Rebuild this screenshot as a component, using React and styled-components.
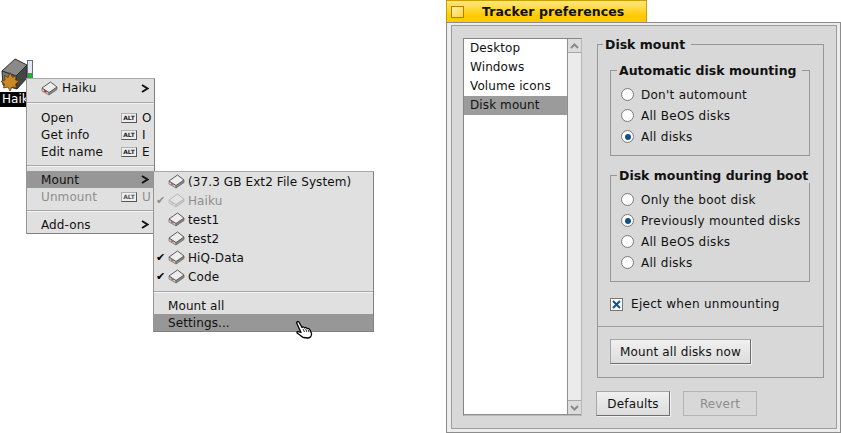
import React from 'react';
import styled, { createGlobalStyle } from 'styled-components';

const GlobalStyle = createGlobalStyle`
html, body {
  margin: 0;
  padding: 0;
  background: #fff;
}
body {
  width: 841px;
  height: 433px;
  overflow: hidden;
  font-family: "DejaVu Sans", Verdana, sans-serif;
  font-size: 12px;
  color: #111;
}
`;

const Desktop = styled.div`
position: relative;
width: 841px;
height: 433px;
overflow: hidden;
`;

/* desktop icon */
const VolumeIcon = styled.div`
position: absolute;
left: 0;
top: 58px;
width: 40px;
`;

const VolumeLabel = styled.div`
background: #000;
color: #fff;
width: 38px;
height: 15px;
line-height: 15px;
padding-left: 2px;
font-size: 12px;
white-space: nowrap;
`;

const BigDisk = () => (
  <svg width="36" height="34" viewBox="0 0 36 34" style={{ display: 'block' }}>
    <path d="M2 13 L15 1 L27 7 L16 18 Z" fill="#8a8a8a" stroke="#2c2c2c" strokeWidth="1" strokeLinejoin="round" />
    <path d="M2 13 L16 18 L17 31 L3 27 Z" fill="#767676" stroke="#2c2c2c" strokeWidth="1" strokeLinejoin="round" />
    <path d="M16 18 L27 7 L27 20 L17 31 Z" fill="#454545" stroke="#2c2c2c" strokeWidth="1" strokeLinejoin="round" />
    <path d="M10 14.5 L12.5 19.5 L16 17.5 L15.5 22 L19 23 L15.5 26 L16.5 29.5 L12 29 L10 33 L8 29 L3.5 30 L4.5 26 L1 23.5 L5 22 L4.5 17.5 L8 19.5 Z" fill="#c98a26" stroke="#5a3a10" strokeWidth="0.8" strokeLinejoin="miter" />
    <rect x="27.5" y="2.5" width="5" height="18" fill="#e2e8ee" stroke="#5d6f80" strokeWidth="1" />
    <rect x="28" y="15" width="4" height="5" fill="#1fb030" />
  </svg>
);

const DiskIcon = ({ dim, red }) => (
  <svg width="17" height="15" viewBox="0 0 17 15" style={{ display: 'block', opacity: dim ? 0.3 : 1 }}>
    <path d="M1 7 L8 11.5 L8 14 L1 10 Z" fill="#cfcfcf" stroke="#777" strokeWidth="0.8" strokeLinejoin="round" />
    <path d="M8 11.5 L16 6 L16 8.5 L8 14 Z" fill="#8a8a8a" stroke="#666" strokeWidth="0.8" strokeLinejoin="round" />
    <path d="M1 7 L9.5 1 L16 6 L8 11.5 Z" fill="#ededed" stroke="#5c5c5c" strokeWidth="1" strokeLinejoin="round" />
    <path d="M3 9.6 L5.5 11.2" stroke={red ? '#e01818' : '#b86a55'} strokeWidth="1.4" />
  </svg>
);

const HandCursor = styled.svg`
position: absolute;
left: 295px;
top: 320px;
`;

/* menus */
const Menu = styled.div`
position: absolute;
left: ${p => p.$left}px;
top: ${p => p.$top}px;
width: ${p => p.$width}px;
box-sizing: border-box;
background: #e0e0e0;
border: 1px solid #808080;
border-top-color: #a8a8a8;
border-left-color: #969696;
`;

const Item = styled.div`
position: relative;
display: flex;
align-items: center;
height: ${p => p.$height || 17}px;
padding-left: ${p => p.$indent}px;
padding-right: 4px;
background: ${p => (p.$active ? '#979797' : 'transparent')};
color: ${p => (p.$disabled ? '#8e8e8e' : '#111')};
white-space: nowrap;
letter-spacing: 0.1px;
`;

const ItemLabel = styled.span`
flex: 1;
`;

const IconSlot = styled.span`
width: ${p => p.$width || 20}px;
flex: none;
display: flex;
align-items: center;
`;

const Check = styled.span`
position: absolute;
left: 2px;
width: 10px;
font-size: 11px;
color: ${p => (p.$dim ? '#8e8e8e' : '#000')};
`;

const Separator = styled.div`
height: ${p => p.$height || 12}px;
display: flex;
align-items: center;
&::after {
  content: "";
  display: block;
  width: 100%;
  height: 1px;
  background: #a8a8a8;
  border-bottom: 1px solid #f4f4f4;
}
`;

const AltKey = styled.span`
display: inline-block;
box-sizing: border-box;
width: 16px;
height: 10px;
margin-right: 5px;
background: #eee;
border: 1px solid #b0b0b0;
border-right-color: #555;
border-bottom-color: #555;
font-size: 6px;
font-weight: bold;
line-height: 8px;
text-align: center;
letter-spacing: 0;
color: ${p => (p.$disabled ? '#555' : '#222')};
`;

const ShortcutLetter = styled.span`
width: 8px;
`;

const ArrowIcon = styled.svg`
flex: none;
margin-right: 1px;
`;

const Arrow = () => (
  <ArrowIcon width="8" height="9" viewBox="0 0 8 9">
    <path d="M1 1 L6.5 4.5 L1 8" fill="none" stroke="#111" strokeWidth="2" />
  </ArrowIcon>
);

const MenuRow = ({ label, letter, disabled, active, arrow, icon, height }) => (
  <Item $indent={14} $disabled={disabled} $active={active} $height={height}>
    {icon && <IconSlot $width={21}>{icon}</IconSlot>}
    <ItemLabel>{label}</ItemLabel>
    {letter && <AltKey $disabled={disabled}>ALT</AltKey>}
    {letter && <ShortcutLetter>{letter}</ShortcutLetter>}
    {arrow && <Arrow />}
  </Item>
);

const VolumeRow = ({ label, checked, dim }) => (
  <Item $indent={14} $height={19} $disabled={dim}>
    {checked && <Check $dim={dim}>✔</Check>}
    <IconSlot><DiskIcon dim={dim} /></IconSlot>
    <ItemLabel>{label}</ItemLabel>
  </Item>
);

/* tracker window */
const Win = styled.div`
position: absolute;
left: 446px;
top: 0;
width: 395px;
height: 433px;
`;

const Tab = styled.div`
display: flex;
align-items: center;
box-sizing: border-box;
width: 201px;
height: 22px;
padding-left: 4px;
gap: 18px;
background: linear-gradient(#ffe680, #ffcb00 70%);
border: 1px solid #c9a000;
border-bottom: none;
font-weight: bold;
font-size: 12.5px;
letter-spacing: 0.1px;
white-space: nowrap;
`;

const CloseBox = styled.span`
width: 13px;
height: 12px;
flex: none;
box-sizing: border-box;
background: linear-gradient(135deg, #ffeeb0, #ffd23c);
border: 1px solid #a98600;
`;

const Frame = styled.div`
box-sizing: border-box;
height: 411px;
border: 1px solid #8c8c8c;
background: #ececec;
padding: 2px 3px 3px 4px;
`;

const Body = styled.div`
box-sizing: border-box;
height: 100%;
border: 1px solid #9c9c9c;
background: #d8d8d8;
display: flex;
padding: 12px 0 0 11px;
`;

const ListBox = styled.div`
display: flex;
width: 119px;
height: 378px;
box-sizing: border-box;
border: 1px solid #858585;
border-right-color: #b8b8b8;
border-bottom-color: #b8b8b8;
flex: none;
`;

const List = styled.div`
flex: 1;
background: #fff;
border-right: 1px solid #909090;
border-bottom: 1px solid #909090;
`;

const ListItem = styled.div`
height: 19px;
line-height: 19px;
padding-left: 6px;
letter-spacing: 0.1px;
background: ${p => (p.$selected ? '#9b9b9b' : 'transparent')};
`;

const ScrollBar = styled.div`
width: 13px;
display: flex;
flex-direction: column;
background: #ebebeb;
border-bottom: 1px solid #909090;
`;

const ScrollBtn = styled.div`
height: 13px;
display: flex;
align-items: center;
justify-content: center;
background: #dcdcdc;
border-${p => p.$edge}: 1px solid #a8a8a8;
`;

const ScrollTrack = styled.div`
flex: 1;
`;

const Right = styled.div`
margin-left: 15px;
width: 228px;
display: flex;
flex-direction: column;
`;

const Group = styled.fieldset`
margin: 0;
padding: 0;
border: 1px solid #979797;
min-width: 0;
`;

const Legend = styled.legend`
margin-left: ${p => p.$offset}px;
padding: 0 ${p => p.$gap}px 0 2px;
font-weight: bold;
font-size: 12.5px;
line-height: 15px;
white-space: nowrap;
`;

const OuterGroup = styled(Group)`
width: 227px;
height: 341px;
box-sizing: border-box;
margin-top: -1px;
`;

const OuterInner = styled.div`
padding: 11px 13px 0 12px;
height: 274px;
box-sizing: border-box;
`;

const InnerGroup = styled(Group)`
box-sizing: border-box;
height: ${p => p.$height}px;
margin-bottom: 12px;
`;

const RadioList = styled.div`
padding: 6px 0 0 10px;
`;

const OptionRow = styled.div`
display: flex;
align-items: center;
height: 21px;
gap: 7px;
letter-spacing: 0.27px;
`;

const RadioCircle = styled.span`
width: 13px;
height: 13px;
box-sizing: border-box;
border-radius: 50%;
background: #fdfdfd;
border: 1px solid #7a7a7a;
flex: none;
display: flex;
align-items: center;
justify-content: center;
&::after {
  content: "";
  width: 6px;
  height: 6px;
  border-radius: 50%;
  background: ${p => (p.$on ? '#10508f' : 'transparent')};
}
`;

const Radio = ({ label, on }) => (
  <OptionRow>
    <RadioCircle $on={on} />
    {label}
  </OptionRow>
);

const CheckRow = styled.div`
display: flex;
align-items: center;
gap: 8px;
height: 14px;
margin-top: 15px;
letter-spacing: 0.3px;
`;

const CheckBox = styled.span`
width: 13px;
height: 13px;
box-sizing: border-box;
background: #fff;
border: 1px solid #777;
display: flex;
align-items: center;
justify-content: center;
`;

const Divider = styled.div`
height: 1px;
background: #9c9c9c;
`;

const ButtonBar = styled.div`
padding: 12px;
`;

const Button = styled.button`
display: block;
box-sizing: border-box;
height: 25px;
width: ${p => p.$width}px;
padding: 0;
font-family: inherit;
font-size: 12px;
letter-spacing: 0.15px;
color: ${p => (p.disabled ? '#8c8c8c' : '#111')};
border: 1px solid ${p => (p.disabled ? '#b4b4b4' : '#6e6e6e')};
border-top-color: ${p => (p.disabled ? '#b4b4b4' : '#a6a6a6')};
border-left-color: ${p => (p.disabled ? '#b4b4b4' : '#a6a6a6')};
background: ${p => (p.disabled ? '#d8d8d8' : 'linear-gradient(#f0f0f0, #dcdcdc)')};
box-shadow: ${p => (p.disabled ? 'none' : '1px 1px 0 #f0f0f0')};
`;

const Footer = styled.div`
display: flex;
gap: 13px;
margin-top: 13px;
margin-left: -1px;
`;

const App = () => (
  <Desktop>
    <GlobalStyle />

    <VolumeIcon>
      <BigDisk />
      <VolumeLabel>Haiku</VolumeLabel>
    </VolumeIcon>

    <Menu $left={26} $top={78} $width={129}>
      <MenuRow label="Haiku" arrow icon={<DiskIcon red />} height={18} />
      <Separator />
      <MenuRow label="Open" letter="O" />
      <MenuRow label="Get info" letter="I" />
      <MenuRow label="Edit name" letter="E" />
      <Separator $height={11} />
      <MenuRow label="Mount" arrow active />
      <MenuRow label="Unmount" letter="U" disabled />
      <Separator $height={11} />
      <MenuRow label="Add-ons" arrow />
    </Menu>

    <Menu $left={153} $top={171} $width={221}>
      <VolumeRow label="(37.3 GB Ext2 File System)" />
      <VolumeRow label="Haiku" checked dim />
      <VolumeRow label="test1" />
      <VolumeRow label="test2" />
      <VolumeRow label="HiQ-Data" checked />
      <VolumeRow label="Code" checked />
      <Separator $height={11} />
      <MenuRow label="Mount all" />
      <MenuRow label="Settings..." active />
    </Menu>

    <HandCursor width="20" height="20" viewBox="0 0 20 20">
      <path d="M1.5 2.5 C2.5 1 4 1.5 4.5 3 L7 7.5 C8 6.5 9 7 9.5 8 C10.5 7 11.5 7.5 12 8.5 C13 8 14.5 8.5 15 10 L16.5 13.5 C17 16 15 18 12.5 18 L8.5 17.5 C7 17 5.5 15 3.5 14 C1.5 13 1.5 11.5 3 11.5 L6 12.5 Z" fill="#fff" stroke="#000" strokeWidth="1.3" strokeLinejoin="round" />
      <path d="M8 9 L9.5 12 M10.5 9 L12 12 M13 9.5 L14 12" stroke="#111" strokeWidth="0.9" />
    </HandCursor>

    <Win>
      <Tab>
        <CloseBox />
        Tracker preferences
      </Tab>
      <Frame>
        <Body>
          <ListBox>
            <List>
              <ListItem>Desktop</ListItem>
              <ListItem>Windows</ListItem>
              <ListItem>Volume icons</ListItem>
              <ListItem $selected>Disk mount</ListItem>
            </List>
            <ScrollBar>
              <ScrollBtn $edge="bottom">
                <svg width="9" height="6" viewBox="0 0 9 6"><path d="M1 5 L4.5 1.5 L8 5" fill="none" stroke="#8a8a8a" strokeWidth="2" /></svg>
              </ScrollBtn>
              <ScrollTrack />
              <ScrollBtn $edge="top">
                <svg width="9" height="6" viewBox="0 0 9 6"><path d="M1 1 L4.5 4.5 L8 1" fill="none" stroke="#8a8a8a" strokeWidth="2" /></svg>
              </ScrollBtn>
            </ScrollBar>
          </ListBox>
          <Right>
            <OuterGroup>
              <Legend $offset={5} $gap={6}>Disk mount</Legend>
              <OuterInner>
                <InnerGroup $height={93}>
                  <Legend $offset={6} $gap={6}>Automatic disk mounting</Legend>
                  <RadioList>
                    <Radio label="Don't automount" />
                    <Radio label="All BeOS disks" />
                    <Radio label="All disks" on />
                  </RadioList>
                </InnerGroup>
                <InnerGroup $height={114}>
                  <Legend $offset={6} $gap={2}>Disk mounting during boot</Legend>
                  <RadioList>
                    <Radio label="Only the boot disk" />
                    <Radio label="Previously mounted disks" on />
                    <Radio label="All BeOS disks" />
                    <Radio label="All disks" />
                  </RadioList>
                </InnerGroup>
                <CheckRow>
                  <CheckBox>
                    <svg width="9" height="9" viewBox="0 0 9 9"><path d="M1 1 L8 8 M8 1 L1 8" stroke="#14508f" strokeWidth="2" /></svg>
                  </CheckBox>
                  Eject when unmounting
                </CheckRow>
              </OuterInner>
              <Divider />
              <ButtonBar>
                <Button $width={141}>Mount all disks now</Button>
              </ButtonBar>
            </OuterGroup>
            <Footer>
              <Button $width={74}>Defaults</Button>
              <Button $width={74} disabled>Revert</Button>
            </Footer>
          </Right>
        </Body>
      </Frame>
    </Win>
  </Desktop>
);

export default App;
